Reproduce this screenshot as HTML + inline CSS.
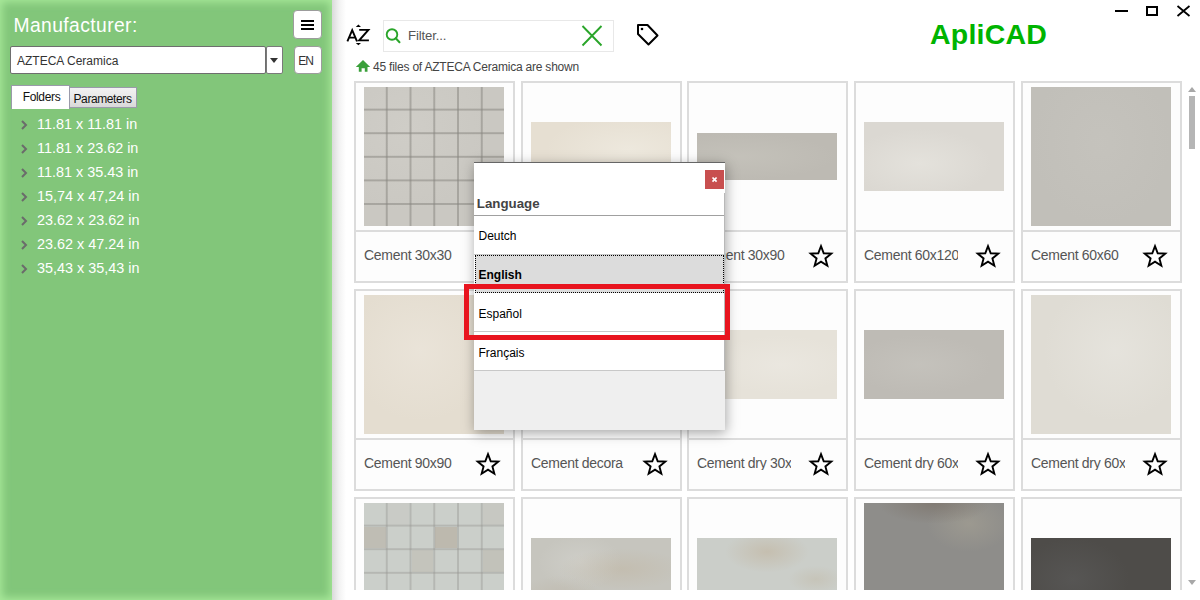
<!DOCTYPE html>
<html><head><meta charset="utf-8">
<style>
*{box-sizing:border-box;margin:0;padding:0}
html,body{width:1200px;height:600px;overflow:hidden;background:#fff;font-family:"Liberation Sans",sans-serif;position:relative}
.abs{position:absolute}
#left{position:absolute;left:0;top:0;width:332px;height:600px;background:#82c67a;box-shadow: inset 0 0 9px 2px #a9ea9b;}
#shadow{position:absolute;left:332px;top:0;width:14px;height:600px;background:linear-gradient(90deg,#dadada,#f2f2f2 50%,#fff)}
.t{position:absolute;white-space:nowrap;line-height:1}
.btn{position:absolute;background:#fff;border:1.6px solid #9c9c9c;border-radius:4px}
.card{position:absolute;width:161px;height:202px;border:2px solid #dcdcdc;background:#fdfdfd}
.img{position:absolute}
.sep{position:absolute;left:0;right:0;top:147px;height:2px;background:#dcdcdc}
.lbl{position:absolute;overflow:hidden;font-size:14px;color:#555;white-space:nowrap;line-height:1}
</style></head><body>
<div id="left"></div>
<div id="shadow"></div>
<div class="t" style="left:13.5px;top:15.66px;font-size:19.3px;color:#fff;font-weight:400;letter-spacing:0.4px;">Manufacturer:</div>
<div class="btn" style="left:293px;top:10px;width:29px;height:29px"></div>
<div class="abs" style="left:301px;top:20px;width:13px;height:2.2px;background:#000"></div>
<div class="abs" style="left:301px;top:24px;width:13px;height:2.2px;background:#000"></div>
<div class="abs" style="left:301px;top:28px;width:13px;height:2.2px;background:#000"></div>
<div class="abs" style="left:10px;top:46px;width:256px;height:28px;background:#fff;border:1px solid #6e6e6e;border-radius:2px"></div>
<div class="t" style="left:17px;top:54.84px;font-size:12px;color:#333;font-weight:400;letter-spacing:0px;">AZTECA Ceramica</div>
<div class="abs" style="left:266px;top:46px;width:17px;height:28px;background:#fff;border:1px solid #7a7a7a;border-radius:2px"></div>
<div class="abs" style="left:270px;top:58px;width:0;height:0;border-left:4.5px solid transparent;border-right:4.5px solid transparent;border-top:5px solid #333"></div>
<div class="btn" style="left:294px;top:46px;width:28px;height:28px"></div>
<div class="t" style="left:298.3px;top:54.64px;font-size:12px;color:#333;font-weight:400;letter-spacing:-1.0px;">EN</div>
<div class="abs" style="left:69px;top:87px;width:68px;height:21px;border:1px solid #9a9aaa;background:linear-gradient(#f2f2f2,#e8e8e8 50%,#d8d8d8)"></div>
<div class="t" style="left:73.5px;top:93.14px;font-size:12px;color:#111;font-weight:400;letter-spacing:-0.4px;">Parameters</div>
<div class="abs" style="left:11px;top:85px;width:59px;height:24px;border:1px solid #9a9aaa;border-bottom:none;background:#fff"></div>
<div class="t" style="left:22.75px;top:91.24px;font-size:12px;color:#111;font-weight:400;letter-spacing:-0.35px;">Folders</div>
<svg class="abs" style="left:19px;top:119px" width="10" height="12"><polyline points="3,2 7,6 3,10" fill="none" stroke="#6b6b6b" stroke-width="2"/></svg>
<div class="t" style="left:37px;top:116.81px;font-size:14.4px;color:#fff;font-weight:400;letter-spacing:0px;">11.81 x 11.81 in</div>
<svg class="abs" style="left:19px;top:143px" width="10" height="12"><polyline points="3,2 7,6 3,10" fill="none" stroke="#6b6b6b" stroke-width="2"/></svg>
<div class="t" style="left:37px;top:140.81px;font-size:14.4px;color:#fff;font-weight:400;letter-spacing:0px;">11.81 x 23.62 in</div>
<svg class="abs" style="left:19px;top:167px" width="10" height="12"><polyline points="3,2 7,6 3,10" fill="none" stroke="#6b6b6b" stroke-width="2"/></svg>
<div class="t" style="left:37px;top:164.81px;font-size:14.4px;color:#fff;font-weight:400;letter-spacing:0px;">11.81 x 35.43 in</div>
<svg class="abs" style="left:19px;top:191px" width="10" height="12"><polyline points="3,2 7,6 3,10" fill="none" stroke="#6b6b6b" stroke-width="2"/></svg>
<div class="t" style="left:37px;top:188.81px;font-size:14.4px;color:#fff;font-weight:400;letter-spacing:0px;">15,74 x 47,24 in</div>
<svg class="abs" style="left:19px;top:215px" width="10" height="12"><polyline points="3,2 7,6 3,10" fill="none" stroke="#6b6b6b" stroke-width="2"/></svg>
<div class="t" style="left:37px;top:212.81px;font-size:14.4px;color:#fff;font-weight:400;letter-spacing:0px;">23.62 x 23.62 in</div>
<svg class="abs" style="left:19px;top:239px" width="10" height="12"><polyline points="3,2 7,6 3,10" fill="none" stroke="#6b6b6b" stroke-width="2"/></svg>
<div class="t" style="left:37px;top:236.81px;font-size:14.4px;color:#fff;font-weight:400;letter-spacing:0px;">23.62 x 47.24 in</div>
<svg class="abs" style="left:19px;top:263px" width="10" height="12"><polyline points="3,2 7,6 3,10" fill="none" stroke="#6b6b6b" stroke-width="2"/></svg>
<div class="t" style="left:37px;top:260.81px;font-size:14.4px;color:#fff;font-weight:400;letter-spacing:0px;">35,43 x 35,43 in</div>
<svg class="abs" style="left:340px;top:20px" width="36" height="30"><path d="M7.4,21.3 L12.2,10.2 L17.0,21.3 M9.0,17.6 L15.4,17.6" fill="none" stroke="#000" stroke-width="1.9"/><path d="M19.2,9.9 L28.4,9.9 L19.2,20.4 L28.9,20.4" fill="none" stroke="#000" stroke-width="1.9" stroke-linejoin="miter"/><path d="M15.8,7 L18.4,4.6 L21,7 Z M15.8,23 L18.4,25.3 L21,23 Z" fill="#000"/></svg>
<div class="abs" style="left:383px;top:20px;width:231px;height:32px;border:1px solid #e8e8e8;background:#fff"></div>
<svg class="abs" style="left:384px;top:26px" width="20" height="20"><circle cx="8" cy="8.5" r="5.3" fill="none" stroke="#2aa52a" stroke-width="1.9"/><line x1="11.8" y1="12.3" x2="15.5" y2="16.2" stroke="#2aa52a" stroke-width="2" stroke-linecap="round"/></svg>
<div class="t" style="left:408px;top:29.13px;font-size:13.2px;color:#555;font-weight:400;letter-spacing:-0.15px;">Filter...</div>
<svg class="abs" style="left:580px;top:24px" width="24" height="24"><path d="M2.5,2 L21.5,21.5 M21.5,2 L2.5,21.5" stroke="#2aa52a" stroke-width="1.9" fill="none"/></svg>
<svg class="abs" style="left:634px;top:22px" width="28" height="26"><path d="M4,3 L13.5,3 L23.5,13.5 L14.5,22.5 L4,12 Z" fill="none" stroke="#000" stroke-width="2" stroke-linejoin="round"/><circle cx="8" cy="7" r="1.3" fill="#000"/></svg>
<div class="t" style="left:930px;top:19.62px;font-size:28.5px;color:#00b400;font-weight:700;letter-spacing:0.2px;">ApliCAD</div>
<div class="t" style="left:373px;top:60.84px;font-size:12px;color:#444;font-weight:400;letter-spacing:-0.22px;">45 files of AZTECA Ceramica are shown</div>
<svg class="abs" style="left:355px;top:59px" width="16" height="14"><path d="M0.8,8 L8,0.9 L15.2,8 L12.5,8 L12.5,12.8 L9.8,12.8 L9.8,9.2 L6.6,9.2 L6.6,12.8 L3.8,12.8 L3.8,8 Z" fill="#3aa03a"/></svg>
<div class="abs" style="left:1114.5px;top:9.8px;width:13px;height:2px;background:#000"></div>
<div class="abs" style="left:1146.3px;top:6px;width:11.6px;height:9.7px;border:2px solid #000"></div>
<svg class="abs" style="left:1176px;top:5px" width="16" height="12"><path d="M1.5,1 L13.5,11 M13.5,1 L1.5,11" stroke="#000" stroke-width="1.8"/></svg>
<div class="abs" style="left:340px;top:78px;width:846px;height:512px;overflow:hidden">
<div class="card" style="left:14px;top:3px"><div class="img" style="left:8px;top:4px;width:140px;height:139px;background-color:#cac8c2;background-image:radial-gradient(ellipse at 30% 30%,rgba(210,208,202,.5),transparent 60%);background-image:linear-gradient(90deg,transparent 21.6px,rgba(135,133,127,.52) 21.6px,rgba(135,133,127,.52) 23.4px,transparent 23.4px),linear-gradient(transparent 21.6px,rgba(135,133,127,.52) 21.6px,rgba(135,133,127,.52) 23.4px,transparent 23.4px),radial-gradient(ellipse at 30% 30%,rgba(212,210,204,.5),transparent 60%);background-size:23.75px 23.6px,23.75px 23.6px,100% 100%"></div><div class="sep"></div><div class="lbl" style="left:8px;top:164.6px;width:94px;letter-spacing:-0.3px">Cement 30x30</div><svg class="abs" style="left:117.69999999999999px;top:160.2px" width="28" height="28"><polygon points="14.00,3.20 16.73,10.24 24.27,10.66 18.42,15.44 20.35,22.74 14.00,18.65 7.65,22.74 9.58,15.44 3.73,10.66 11.27,10.24" fill="none" stroke="#000" stroke-width="1.9" stroke-linejoin="miter"/></svg></div>
<div class="card" style="left:181px;top:3px"><div class="img" style="left:8px;top:39px;width:140px;height:69px;background-color:#e6dfd2;background-image:radial-gradient(ellipse at 70% 40%,rgba(240,236,226,.7),transparent 60%)"></div><div class="sep"></div><div class="lbl" style="left:8px;top:164.6px;width:94px;letter-spacing:-0.3px">Cement 30x60</div><svg class="abs" style="left:117.69999999999999px;top:160.2px" width="28" height="28"><polygon points="14.00,3.20 16.73,10.24 24.27,10.66 18.42,15.44 20.35,22.74 14.00,18.65 7.65,22.74 9.58,15.44 3.73,10.66 11.27,10.24" fill="none" stroke="#000" stroke-width="1.9" stroke-linejoin="miter"/></svg></div>
<div class="card" style="left:347px;top:3px"><div class="img" style="left:8px;top:50px;width:140px;height:47px;background-color:#bdbab3;background-image:radial-gradient(ellipse at 30% 50%,rgba(200,198,190,.6),transparent 70%)"></div><div class="sep"></div><div class="lbl" style="left:8px;top:164.6px;width:94px;letter-spacing:-0.3px">Cement 30x90</div><svg class="abs" style="left:117.69999999999999px;top:160.2px" width="28" height="28"><polygon points="14.00,3.20 16.73,10.24 24.27,10.66 18.42,15.44 20.35,22.74 14.00,18.65 7.65,22.74 9.58,15.44 3.73,10.66 11.27,10.24" fill="none" stroke="#000" stroke-width="1.9" stroke-linejoin="miter"/></svg></div>
<div class="card" style="left:514px;top:3px"><div class="img" style="left:8px;top:39px;width:140px;height:69px;background-color:#dbd8d2;background-image:radial-gradient(ellipse at 40% 60%,rgba(230,228,222,.8),transparent 60%)"></div><div class="sep"></div><div class="lbl" style="left:8px;top:164.6px;width:94px;letter-spacing:-0.3px">Cement 60x120</div><svg class="abs" style="left:117.69999999999999px;top:160.2px" width="28" height="28"><polygon points="14.00,3.20 16.73,10.24 24.27,10.66 18.42,15.44 20.35,22.74 14.00,18.65 7.65,22.74 9.58,15.44 3.73,10.66 11.27,10.24" fill="none" stroke="#000" stroke-width="1.9" stroke-linejoin="miter"/></svg></div>
<div class="card" style="left:681px;top:3px"><div class="img" style="left:8px;top:4px;width:140px;height:139px;background-color:#c1bfb9;background-image:radial-gradient(ellipse at 50% 40%,rgba(200,198,192,.5),transparent 70%)"></div><div class="sep"></div><div class="lbl" style="left:8px;top:164.6px;width:94px;letter-spacing:-0.3px">Cement 60x60</div><svg class="abs" style="left:117.69999999999999px;top:160.2px" width="28" height="28"><polygon points="14.00,3.20 16.73,10.24 24.27,10.66 18.42,15.44 20.35,22.74 14.00,18.65 7.65,22.74 9.58,15.44 3.73,10.66 11.27,10.24" fill="none" stroke="#000" stroke-width="1.9" stroke-linejoin="miter"/></svg></div>
<div class="card" style="left:14px;top:211px"><div class="img" style="left:8px;top:4px;width:140px;height:139px;background-color:#e4ddd0;background-image:radial-gradient(ellipse at 40% 40%,rgba(236,230,220,.7),transparent 60%)"></div><div class="sep"></div><div class="lbl" style="left:8px;top:164.6px;width:94px;letter-spacing:-0.3px">Cement 90x90</div><svg class="abs" style="left:117.69999999999999px;top:160.2px" width="28" height="28"><polygon points="14.00,3.20 16.73,10.24 24.27,10.66 18.42,15.44 20.35,22.74 14.00,18.65 7.65,22.74 9.58,15.44 3.73,10.66 11.27,10.24" fill="none" stroke="#000" stroke-width="1.9" stroke-linejoin="miter"/></svg></div>
<div class="card" style="left:181px;top:211px"><div class="img" style="left:8px;top:39px;width:140px;height:69px;background-color:#e0dcd3"></div><div class="sep"></div><div class="lbl" style="left:8px;top:164.6px;width:94px;letter-spacing:-0.3px">Cement decora</div><svg class="abs" style="left:117.69999999999999px;top:160.2px" width="28" height="28"><polygon points="14.00,3.20 16.73,10.24 24.27,10.66 18.42,15.44 20.35,22.74 14.00,18.65 7.65,22.74 9.58,15.44 3.73,10.66 11.27,10.24" fill="none" stroke="#000" stroke-width="1.9" stroke-linejoin="miter"/></svg></div>
<div class="card" style="left:347px;top:211px"><div class="img" style="left:8px;top:39px;width:140px;height:69px;background-color:#e6e2d9;background-image:radial-gradient(ellipse at 60% 50%,rgba(236,233,226,.7),transparent 60%)"></div><div class="sep"></div><div class="lbl" style="left:8px;top:164.6px;width:94px;letter-spacing:-0.3px">Cement dry 30x90</div><svg class="abs" style="left:117.69999999999999px;top:160.2px" width="28" height="28"><polygon points="14.00,3.20 16.73,10.24 24.27,10.66 18.42,15.44 20.35,22.74 14.00,18.65 7.65,22.74 9.58,15.44 3.73,10.66 11.27,10.24" fill="none" stroke="#000" stroke-width="1.9" stroke-linejoin="miter"/></svg></div>
<div class="card" style="left:514px;top:211px"><div class="img" style="left:8px;top:39px;width:140px;height:69px;background-color:#bebbb5;background-image:radial-gradient(ellipse at 40% 50%,rgba(200,198,192,.6),transparent 60%)"></div><div class="sep"></div><div class="lbl" style="left:8px;top:164.6px;width:94px;letter-spacing:-0.3px">Cement dry 60x120</div><svg class="abs" style="left:117.69999999999999px;top:160.2px" width="28" height="28"><polygon points="14.00,3.20 16.73,10.24 24.27,10.66 18.42,15.44 20.35,22.74 14.00,18.65 7.65,22.74 9.58,15.44 3.73,10.66 11.27,10.24" fill="none" stroke="#000" stroke-width="1.9" stroke-linejoin="miter"/></svg></div>
<div class="card" style="left:681px;top:211px"><div class="img" style="left:8px;top:4px;width:140px;height:139px;background-color:#dfdcd4;background-image:radial-gradient(ellipse at 60% 40%,rgba(232,230,224,.7),transparent 60%)"></div><div class="sep"></div><div class="lbl" style="left:8px;top:164.6px;width:94px;letter-spacing:-0.3px">Cement dry 60x60</div><svg class="abs" style="left:117.69999999999999px;top:160.2px" width="28" height="28"><polygon points="14.00,3.20 16.73,10.24 24.27,10.66 18.42,15.44 20.35,22.74 14.00,18.65 7.65,22.74 9.58,15.44 3.73,10.66 11.27,10.24" fill="none" stroke="#000" stroke-width="1.9" stroke-linejoin="miter"/></svg></div>
<div class="card" style="left:14px;top:419px"><div class="img" style="left:8px;top:4px;width:140px;height:139px;background-color:#cbcfca"></div><div class="img" style="left:8.00px;top:27.60px;width:21.7px;height:21.7px;background:rgba(165,150,130,0.3)"></div><div class="img" style="left:79.25px;top:27.60px;width:21.7px;height:21.7px;background:rgba(165,150,130,0.38)"></div><div class="img" style="left:55.50px;top:51.20px;width:21.7px;height:21.7px;background:rgba(165,150,130,0.18)"></div><div class="img" style="left:126.75px;top:51.20px;width:21.7px;height:21.7px;background:rgba(165,150,130,0.22)"></div><div class="img" style="left:31.75px;top:4.00px;width:21.7px;height:21.7px;background:rgba(165,150,130,0.06)"></div><div class="img" style="left:126.75px;top:4.00px;width:21.7px;height:21.7px;background:rgba(165,150,130,0.1)"></div><div class="img" style="left:8px;top:4px;width:140px;height:139px;background-image:linear-gradient(90deg,transparent 21.7px,rgba(150,150,146,.42) 21.7px,rgba(150,150,146,.42) 23.4px,transparent 23.4px),linear-gradient(transparent 21.7px,rgba(150,150,146,.42) 21.7px,rgba(150,150,146,.42) 23.4px,transparent 23.4px);background-size:23.75px 23.6px"></div><div class="sep"></div></div>
<div class="card" style="left:181px;top:419px"><div class="img" style="left:8px;top:39px;width:140px;height:69px;background-color:#c6c5be;background-image:radial-gradient(ellipse 45% 30% at 65% 45%,rgba(190,175,150,.35),transparent),radial-gradient(ellipse 30% 30% at 20% 85%,rgba(180,168,148,.3),transparent),radial-gradient(ellipse 30% 40% at 35% 35%,rgba(215,215,210,.5),transparent)"></div><div class="sep"></div></div>
<div class="card" style="left:347px;top:419px"><div class="img" style="left:8px;top:39px;width:140px;height:69px;background-color:#cbcec9;background-image:radial-gradient(ellipse 30% 30% at 50% 20%,rgba(190,172,145,.45),transparent),radial-gradient(ellipse 20% 20% at 85% 60%,rgba(190,178,155,.35),transparent)"></div><div class="sep"></div></div>
<div class="card" style="left:514px;top:419px"><div class="img" style="left:8px;top:4px;width:140px;height:139px;background-color:#8e8d8a;background-image:radial-gradient(ellipse 40% 15% at 50% 0%,rgba(120,110,100,.6),transparent),radial-gradient(ellipse 30% 20% at 75% 15%,rgba(170,165,150,.5),transparent)"></div><div class="sep"></div></div>
<div class="card" style="left:681px;top:419px"><div class="img" style="left:8px;top:39px;width:140px;height:69px;background-color:#4e4c49;background-image:radial-gradient(ellipse 40% 60% at 30% 60%,rgba(95,95,95,.5),transparent)"></div><div class="sep"></div></div>
</div>
<div class="abs" style="left:1188px;top:87px;width:0;height:0;border-left:4px solid transparent;border-right:4px solid transparent;border-bottom:5px solid #a8a8a8"></div>
<div class="abs" style="left:1189px;top:96px;width:6px;height:53px;background:#b5b5b5"></div>
<div class="abs" style="left:1188px;top:580px;width:0;height:0;border-left:4px solid transparent;border-right:4px solid transparent;border-top:5px solid #a8a8a8"></div>
<div class="abs" style="left:474px;top:162px;width:251px;height:268px;background:#fff;border-top:1px solid #666;box-shadow:1px 3px 12px rgba(0,0,0,.35)"></div>
<div class="abs" style="left:705px;top:170px;width:19px;height:19px;background:#c84f4f"></div>
<svg class="abs" style="left:705px;top:170px" width="19" height="19"><path d="M7.5,7.5 L11.6,11.6 M11.6,7.5 L7.5,11.6" stroke="#fff" stroke-width="1.7"/></svg>
<div class="t" style="left:476.8px;top:196.64px;font-size:13.3px;color:#444;font-weight:700;letter-spacing:0px;">Language</div>
<div class="abs" style="left:474px;top:215px;width:251px;height:1px;background:#a0a0a0"></div>
<div class="abs" style="left:723.5px;top:193px;width:1px;height:178px;background:#b8b8b8"></div>
<div class="abs" style="left:474px;top:254px;width:250px;height:1px;background:#c8c8c8"></div>
<div class="t" style="left:478.5px;top:229.54px;font-size:12px;color:#000;font-weight:400;letter-spacing:0px;">Deutch</div>
<div class="abs" style="left:475px;top:255px;width:249px;height:38px;background:#dcdcdc;border:1px dotted #000"></div>
<div class="t" style="left:478.5px;top:268.64px;font-size:12px;color:#000;font-weight:700;letter-spacing:0px;">English</div>
<div class="abs" style="left:474px;top:331px;width:250px;height:1px;background:#c8c8c8"></div>
<div class="t" style="left:478.5px;top:307.84px;font-size:12px;color:#000;font-weight:400;letter-spacing:0px;">Español</div>
<div class="abs" style="left:474px;top:370px;width:250px;height:1px;background:#c8c8c8"></div>
<div class="t" style="left:478.5px;top:346.74px;font-size:12px;color:#000;font-weight:400;letter-spacing:0px;">Français</div>
<div class="abs" style="left:474px;top:371px;width:251px;height:59px;background:#efefef"></div>
<div class="abs" style="left:464px;top:284px;width:266px;height:56px;border:5px solid #e8141e"></div>
</body></html>
